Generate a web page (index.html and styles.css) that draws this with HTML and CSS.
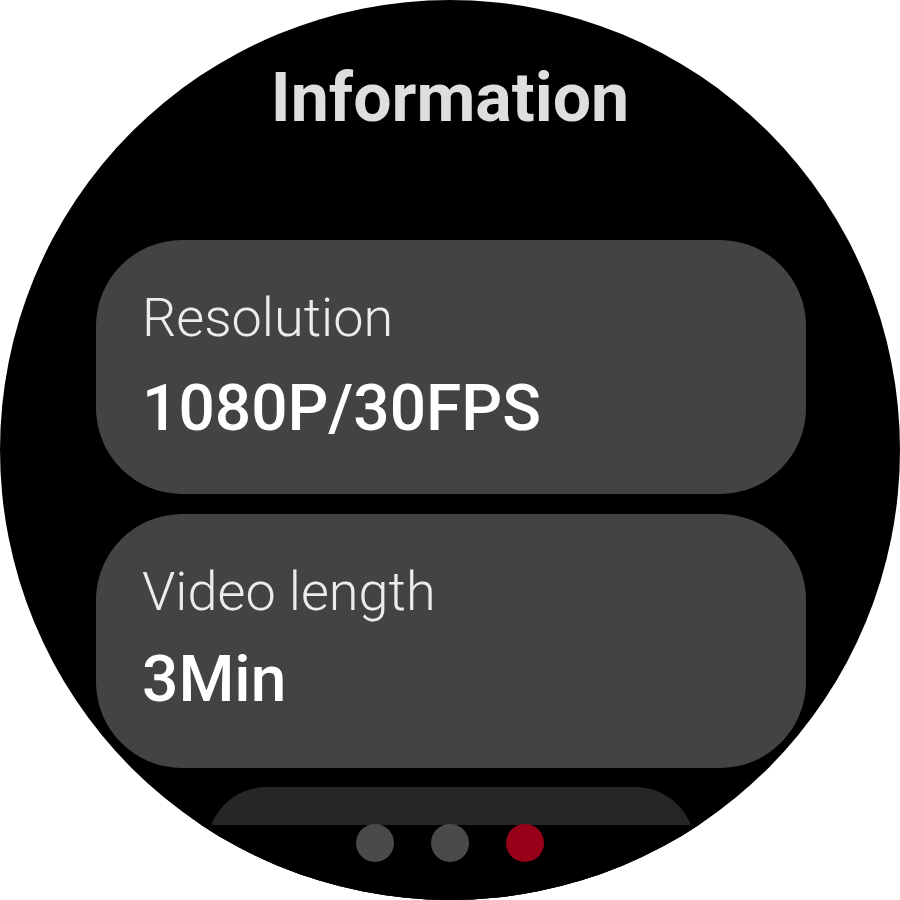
FILE: index.html
```html
<!DOCTYPE html>
<html>
<head>
<meta charset="utf-8">
<link rel="stylesheet" href="styles.css">
</head>
<body>
<div class="watch">
  <h1 class="title">Information</h1>
  <div class="list">
    <div class="card">
      <div class="label">Resolution</div>
      <div class="value">1080P/30FPS</div>
    </div>
    <div class="card card-second">
      <div class="label">Video length</div>
      <div class="value">3Min</div>
    </div>
    <div class="card card-peek"></div>
  </div>
  <div class="pager">
    <span class="dot"></span>
    <span class="dot"></span>
    <span class="dot dot-active"></span>
  </div>
</div>
</body>
</html>
```
FILE: styles.css
```css
html, body {
  margin: 0;
  padding: 0;
  background: #ffffff;
}
body {
  width: 900px;
  height: 900px;
  font-family: Roboto, "Noto Sans", sans-serif;
}
.watch {
  position: relative;
  width: 900px;
  height: 900px;
  border-radius: 50%;
  background: #000000;
  overflow: hidden;
  display: flex;
  flex-direction: column;
  align-items: center;
}
.title {
  margin: 58px 0 0 0;
  font-size: 68px;
  line-height: 80px;
  font-weight: 700;
  color: #dedede;
}
.list {
  margin-top: 102px;
  display: flex;
  flex-direction: column;
  align-items: center;
  gap: 20px;
  width: 100%;
}
.card {
  box-sizing: border-box;
  width: 710px;
  height: 254px;
  margin-left: 2px;
  border-radius: 86px;
  background: #434343;
  padding: 46px 0 0 46px;
  flex-shrink: 0;
}
.label {
  font-size: 54px;
  line-height: 64px;
  font-weight: 300;
  color: #ececec;
}
.value {
  margin-top: 23px;
  font-size: 64px;
  line-height: 72px;
  font-weight: 500;
  color: #ffffff;
}
.card-second .value {
  margin-top: 20px;
}
.card-peek {
  width: 488px;
  height: 200px;
  margin-left: 2px;
  margin-top: -1px;
  border-radius: 60px;
  background: #262626;
  padding: 0;
}
.pager {
  position: absolute;
  left: 0;
  right: 0;
  top: 825px;
  height: 75px;
  background: #000000;
  display: flex;
  justify-content: center;
  align-items: flex-start;
  gap: 37px;
}
.dot {
  width: 38px;
  height: 38px;
  border-radius: 50%;
  background: #4a4a4a;
  margin-top: -1px;
}
.dot-active {
  background: #980019;
}
```
